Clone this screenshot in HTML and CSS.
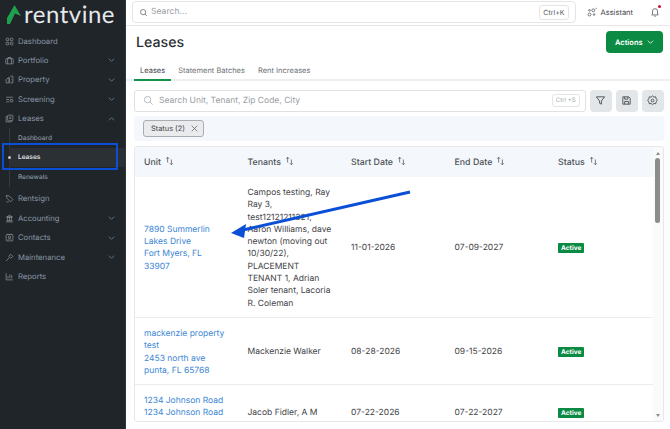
FILE: index.html

```html
<!DOCTYPE html>
<html lang="en">
<head>
    <meta charset="UTF-8">
    <meta name="viewport" content="width=device-width, initial-scale=1.0">
    <title>Leases</title>
    <link rel="stylesheet" href="styles.css">
</head>
<body>

    <!-- Sidebar Navigation -->
    <div class="sidebar">
        <div class="logo">
            <svg class="logo-mark" viewBox="0 0 14 19"><path d="M7.500 0 L14 11 L8 8.500 L3 19 L0 19 L0 13 Z" fill="#1fa04f"/></svg>
            <span>rentvine</span>
        </div>
        <ul class="nav-links">
            <li><svg class="nav-icon" viewBox="0 0 24 24"><rect x="3" y="3" width="7" height="7" rx="2"/><rect x="14" y="3" width="7" height="7" rx="2"/><rect x="3" y="14" width="7" height="7" rx="2"/><rect x="14" y="14" width="7" height="7" rx="2"/></svg>Dashboard</li>
            <li><svg class="nav-icon" viewBox="0 0 24 24"><rect x="2" y="7" width="20" height="14" rx="2"/><path d="M8 7V4h8v3M7 7v14M17 7v14"/></svg>Portfolio<svg class="chev" viewBox="0 0 10 6"><path d="M1 1l4 4 4-4"/></svg></li>
            <li><svg class="nav-icon" viewBox="0 0 24 24"><path d="M3 21V12l8-6v15zM11 21V8M14 3h7v18h-7M17 8h1M17 12h1M17 16h1"/></svg>Property<svg class="chev" viewBox="0 0 10 6"><path d="M1 1l4 4 4-4"/></svg></li>
            <li><svg class="nav-icon" viewBox="0 0 24 24"><path d="M3 6h18M3 12h8M3 18h8"/><rect x="14" y="12" width="7" height="6" rx="1"/></svg>Screening<svg class="chev" viewBox="0 0 10 6"><path d="M1 1l4 4 4-4"/></svg></li>
            <li><svg class="nav-icon" viewBox="0 0 24 24"><rect x="7" y="3" width="14" height="15" rx="2"/><path d="M7 7H3v14h14v-3M11 8h6M11 12h6"/></svg>Leases<svg class="chev" viewBox="0 0 10 6"><path d="M1 5l4-4 4 4"/></svg></li>
        </ul>
        <ul class="sub-links">
            <li>Dashboard</li>
            <li class="active">Leases</li>
            <li>Renewals</li>
        </ul>
        <ul class="nav-links">
            <li><svg class="nav-icon" viewBox="0 0 24 24"><path d="M3 4l8 1 10 10-6 6L5 11zM7 8h.1M4 21h6"/></svg>Rentsign</li>
            <li><svg class="nav-icon" viewBox="0 0 24 24"><path d="M3 21h18M5 8h14M12 3l8 5H4zM7 8v10M12 8v10M17 8v10M4 18h16"/></svg>Accounting<svg class="chev" viewBox="0 0 10 6"><path d="M1 1l4 4 4-4"/></svg></li>
            <li><svg class="nav-icon" viewBox="0 0 24 24"><rect x="3" y="4" width="18" height="17" rx="2"/><circle cx="12" cy="11" r="3"/><path d="M7 18c1-3 9-3 10 0M8 2v3M16 2v3"/></svg>Contacts<svg class="chev" viewBox="0 0 10 6"><path d="M1 1l4 4 4-4"/></svg></li>
            <li><svg class="nav-icon" viewBox="0 0 24 24"><path d="M3 21l9-9M10 9l5-6 6 6-6 5z"/></svg>Maintenance<svg class="chev" viewBox="0 0 10 6"><path d="M1 1l4 4 4-4"/></svg></li>
            <li><svg class="nav-icon" viewBox="0 0 24 24"><path d="M3 3v18h18M8 17v-6M13 17V6M18 17v-9"/></svg>Reports</li>
        </ul>
    </div>

    <!-- Main Content -->
    <div class="main-content">
        <div class="topbar">
            <div class="global-search">
                <svg class="icon" viewBox="0 0 24 24"><circle cx="11" cy="11" r="7"/><path d="M16 16l5 5"/></svg>
                <span class="placeholder">Search...</span>
                <span class="kbd">Ctrl+K</span>
            </div>
            <div class="assistant">
                <svg class="icon" viewBox="0 0 24 24"><circle cx="6" cy="18" r="3.500"/><circle cx="15" cy="8" r="3.500"/><circle cx="17" cy="18" r="2"/><circle cx="6" cy="8" r="2"/><path d="M22 2v3"/></svg>
                Assistant
            </div>
            <div class="bell">
                <svg class="icon" viewBox="0 0 24 24"><path d="M6 17V10a6 6 0 0 1 12 0v7l2 2H4zM10 22h4"/></svg>
                <span class="bell-dot"></span>
            </div>
        </div>

        <div class="page-head">
            <h1>Leases</h1>
            <button class="actions-btn">Actions<svg class="chev" viewBox="0 0 10 6"><path d="M1 1l4 4 4-4"/></svg></button>
        </div>

        <div class="tabs">
            <div class="tab active">Leases</div>
            <div class="tab">Statement Batches</div>
            <div class="tab">Rent Increases</div>
        </div>

        <div class="content">
            <div class="search-row">
                <div class="lease-search">
                    <svg class="icon" viewBox="0 0 24 24"><circle cx="10" cy="10" r="7"/><path d="M15 15l6 6"/></svg>
                    <span class="placeholder">Search Unit, Tenant, Zip Code, City</span>
                    <span class="kbd light">Ctrl +S</span>
                </div>
                <button class="tool-btn"><svg class="icon" viewBox="0 0 24 24"><path d="M3 4h18l-7 9v7l-4-2v-5z"/></svg></button>
                <button class="tool-btn"><svg class="icon" viewBox="0 0 24 24"><path d="M4 4h13l3 3v13H4zM8 4v5h7V4M8 20v-6h8v6"/></svg></button>
                <button class="tool-btn"><svg class="icon" viewBox="0 0 24 24"><path d="M12 2l3 2.500 4-.500 1 4 2.500 3.500-2.500 3.500-1 4-4-.500-3 2.500-3-2.500-4 .500-1-4L1.500 11.500 4 8l1-4 4 .500z"/><circle cx="12" cy="12" r="3"/></svg></button>
            </div>

            <div class="filter-bar">
                <div class="chip">Status (2)<svg class="chip-x" viewBox="0 0 10 10"><path d="M1 1l8 8M9 1l-8 8"/></svg></div>
            </div>

            <div class="table-card">
                <div class="table-wrap">
                    <table>
                        <thead>
                            <tr>
                                <th>Unit<svg class="sort" viewBox="0 0 12 12"><path d="M3.500 8V1M1.500 3l2-2 2 2M8.500 4v7M6.500 9l2 2 2-2"/></svg></th>
                                <th>Tenants<svg class="sort" viewBox="0 0 12 12"><path d="M3.500 8V1M1.500 3l2-2 2 2M8.500 4v7M6.500 9l2 2 2-2"/></svg></th>
                                <th>Start Date<svg class="sort" viewBox="0 0 12 12"><path d="M3.500 8V1M1.500 3l2-2 2 2M8.500 4v7M6.500 9l2 2 2-2"/></svg></th>
                                <th>End Date<svg class="sort" viewBox="0 0 12 12"><path d="M3.500 8V1M1.500 3l2-2 2 2M8.500 4v7M6.500 9l2 2 2-2"/></svg></th>
                                <th>Status<svg class="sort" viewBox="0 0 12 12"><path d="M3.500 8V1M1.500 3l2-2 2 2M8.500 4v7M6.500 9l2 2 2-2"/></svg></th>
                            </tr>
                        </thead>
                        <tbody>
                            <tr>
                                <td class="unit">7890 Summerlin Lakes Drive<br>Fort Myers, FL 33907</td>
                                <td>Campos testing, Ray Ray 3, test12121211321, Aaron Williams, dave newton (moving out 10/30/22), PLACEMENT TENANT 1, Adrian Soler tenant, Lacoria R. Coleman</td>
                                <td>11-01-2026</td>
                                <td>07-09-2027</td>
                                <td><span class="badge">Active</span></td>
                            </tr>
                            <tr>
                                <td class="unit">mackenzie property test<br>2453 north ave<br>punta, FL 65768</td>
                                <td>Mackenzie Walker</td>
                                <td>08-28-2026</td>
                                <td>09-15-2026</td>
                                <td><span class="badge">Active</span></td>
                            </tr>
                            <tr>
                                <td class="unit">1234 Johnson Road<br>1234 Johnson Road<br>Albany, TX 75043</td>
                                <td>Jacob Fidler, A M</td>
                                <td>07-22-2026</td>
                                <td>07-22-2027</td>
                                <td><span class="badge">Active</span></td>
                            </tr>
                        </tbody>
                    </table>
                </div>
                <div class="scrollbar">
                    <span class="arrow-up"></span>
                    <span class="thumb"></span>
                    <span class="arrow-down"></span>
                </div>
            </div>
        </div>
    </div>

    <!-- Annotations over the screenshot -->
    <div class="highlight-box"></div>
    <svg class="callout" viewBox="0 0 670 429">
        <path d="M410 192 L243 230" stroke="#0a4fd6" stroke-width="3" fill="none"/>
        <path d="M231 233 L246 224 L244 238 Z" fill="#0a4fd6"/>
    </svg>

</body>
</html>
```

FILE: styles.css

```css
/* General Styles */
* {
    margin: 0;
    padding: 0;
    box-sizing: border-box;
    font-family: 'Inter', sans-serif;
    text-rendering: geometricPrecision;
}

body {
    display: flex;
    height: 429px;
    overflow: hidden;
    background: white;
    color: #3f4448;
    font-size: 10px;
}

/* Sidebar Navigation */
.sidebar {
    width: 126px;
    flex-shrink: 0;
    background: #1f2529;
    border-right: 1px solid #30363b;
    color: #8b97a6;
}

.logo {
    display: flex;
    align-items: center;
    gap: 3px;
    height: 31.400px;
    padding: 0 0 2px 7px;
    color: #e6e8ea;
}

.logo span {
    font-family: 'Lato', sans-serif;
    font-size: 24px;
    letter-spacing: 0.500px;
    line-height: 24px;
}

.logo-mark {
    width: 14px;
    height: 19px;
}

.nav-links {
    list-style: none;
}

.nav-links li {
    display: flex;
    align-items: center;
    height: 19.400px;
    padding: 0 10px 0 5px;
    font-size: 7.700px;
}

.nav-icon {
    width: 9px;
    height: 9px;
    margin-right: 4px;
    fill: none;
    stroke: #8a929a;
    stroke-width: 2;
}

.chev {
    width: 7px;
    height: 4px;
    margin-left: auto;
    fill: none;
    stroke: #7d868e;
    stroke-width: 1.200;
}

.sub-links {
    list-style: none;
    margin: 0 0 2.700px 9px;
    border-left: 1px solid #343a3f;
}

.sub-links li {
    display: flex;
    align-items: center;
    height: 19.400px;
    padding-left: 8px;
    font-size: 6.500px;
    font-weight: 500;
}

.sub-links .active {
    position: relative;
    margin-left: -1px;
    padding-left: 9px;
    background: #2b3034;
    color: #e2e5e8;
    font-weight: 600;
}

.sub-links .active::before {
    content: "";
    position: absolute;
    left: -1px;
    width: 3px;
    height: 3px;
    border-radius: 50%;
    background: #c3c7cb;
}

/* Main Content */
.main-content {
    flex: 1;
    min-width: 0;
}

.icon {
    width: 10px;
    height: 10px;
    flex-shrink: 0;
    fill: none;
    stroke: #5c6266;
    stroke-width: 2;
}

.placeholder {
    color: #9a9ea3;
}

.kbd {
    margin-left: auto;
    padding: 2px 3px;
    border: 1px solid #e2e4e6;
    border-radius: 3px;
    font-size: 7px;
    color: #55595d;
}

.kbd.light {
    color: #a6aaae;
    font-size: 6px;
}

.topbar {
    display: flex;
    align-items: center;
    height: 26px;
    padding: 1px 10px 2px 6px;
    border-bottom: 1px solid #e6e8ea;
}

.global-search {
    display: flex;
    align-items: center;
    gap: 3px;
    width: 444px;
    height: 21.500px;
    padding: 0 6px;
    border: 1px solid #e3e5e7;
    border-radius: 4px;
    font-size: 8.600px;
}

.global-search .icon {
    width: 9px;
    height: 9px;
}

.assistant {
    display: flex;
    align-items: center;
    gap: 4px;
    margin-left: 11px;
    font-size: 7.500px;
}

.bell {
    position: relative;
    display: flex;
    margin-left: 17px;
}

.bell-dot {
    position: absolute;
    top: -2px;
    right: -1px;
    width: 3px;
    height: 3px;
    border-radius: 50%;
    background: #c8102e;
}

.page-head {
    display: flex;
    align-items: center;
    justify-content: space-between;
    height: 32px;
    padding: 0 7px 0 10px;
}

h1 {
    font-size: 14.200px;
    font-weight: 500;
    color: #2b2f33;
}

.actions-btn {
    display: flex;
    align-items: center;
    width: 57px;
    height: 21.500px;
    padding: 0 9px;
    border: none;
    border-radius: 4px;
    background: #0a8a43;
    color: white;
    font-size: 7.500px;
    font-weight: 600;
}

.actions-btn .chev {
    stroke: white;
}

.tabs {
    display: flex;
    height: 23px;
    padding-left: 8px;
    border-bottom: 2px solid #eeeff0;
}

.tab {
    height: 23px;
    padding: 7.500px 6px 0;
    margin-right: 1px;
    font-size: 7.500px;
    color: #6c7176;
    white-space: nowrap;
}

.tab.active {
    color: #3f4448;
    border-bottom: 2px solid #13934a;
}

.content {
    padding: 8.500px 6.500px 0 8px;
}

.search-row {
    display: flex;
    gap: 4px;
}

.lease-search {
    display: flex;
    align-items: center;
    gap: 5px;
    flex: 1;
    height: 22px;
    padding: 0 5px 0 8px;
    border: 1px solid #dfe1e3;
    border-radius: 3px;
    font-size: 8.500px;
}

.lease-search .icon {
    width: 11px;
    height: 11px;
    stroke: #9a9ea3;
    stroke-width: 1.500;
}

.tool-btn {
    display: flex;
    align-items: center;
    justify-content: center;
    width: 22px;
    height: 22px;
    border: none;
    border-radius: 4px;
    background: #e3e6e8;
}

.tool-btn .icon {
    width: 11px;
    height: 11px;
    stroke: #4a4f53;
}

.filter-bar {
    height: 25px;
    margin-top: 4.500px;
    padding: 4px 9px;
    border-radius: 3px;
    background: #f4f7fb;
}

.chip {
    display: inline-flex;
    align-items: center;
    gap: 6px;
    height: 17px;
    padding: 0 5px 0 7px;
    border: 1px solid #a9adb1;
    border-radius: 3px;
    background: #e9ebed;
    font-size: 7.400px;
}

.chip-x {
    width: 7px;
    height: 7px;
    stroke: #55595d;
    stroke-width: 1;
}

/* Table */
.table-card {
    display: flex;
    height: 276px;
    margin-top: 5px;
    border: 1px solid #e6e8ea;
    border-radius: 3px;
    overflow: hidden;
}

.table-wrap {
    flex: 1;
    min-width: 0;
    overflow: hidden;
}

table {
    width: 100%;
    border-collapse: collapse;
    table-layout: fixed;
}

th {
    height: 30px;
    padding: 0 9px;
    background: #f4f7fb;
    font-size: 8.800px;
    font-weight: 500;
    color: #4d5257;
    text-align: left;
}

.sort {
    width: 9px;
    height: 10px;
    margin-left: 4px;
    vertical-align: -1px;
    fill: none;
    stroke: #4f5559;
    stroke-width: 1;
}

td {
    padding: 10px 8px 7px 9px;
    border-bottom: 1px solid #e9ebed;
    font-size: 8.500px;
    line-height: 12.300px;
    color: #3f4448;
    overflow-wrap: anywhere;
}

td.unit {
    padding-right: 12px;
    color: #3b86d4;
}

.badge {
    display: inline-block;
    padding: 0 3px;
    height: 10px;
    border-radius: 1px;
    background: #0a8a43;
    color: white;
    font-size: 6.500px;
    font-weight: 700;
    line-height: 10px;
}

.scrollbar {
    display: flex;
    flex-direction: column;
    align-items: center;
    width: 10px;
    flex-shrink: 0;
    padding: 5px 0 4px;
    background: #fafafa;
}

.thumb {
    width: 5px;
    height: 65px;
    margin-top: 3px;
    border-radius: 3px;
    background: #8c8c8c;
}

.arrow-up {
    width: 0;
    height: 0;
    border-left: 2.500px solid transparent;
    border-right: 2.500px solid transparent;
    border-bottom: 3px solid #8c8c8c;
}

.arrow-down {
    width: 0;
    height: 0;
    margin-top: auto;
    border-left: 2.500px solid transparent;
    border-right: 2.500px solid transparent;
    border-top: 3px solid #8c8c8c;
}

/* Annotations */
.highlight-box {
    position: absolute;
    left: 2px;
    top: 143px;
    width: 116px;
    height: 27px;
    border: 2.500px solid #0a4fd6;
}

.callout {
    position: absolute;
    left: 0;
    top: 0;
    width: 670px;
    height: 429px;
    pointer-events: none;
}
```
